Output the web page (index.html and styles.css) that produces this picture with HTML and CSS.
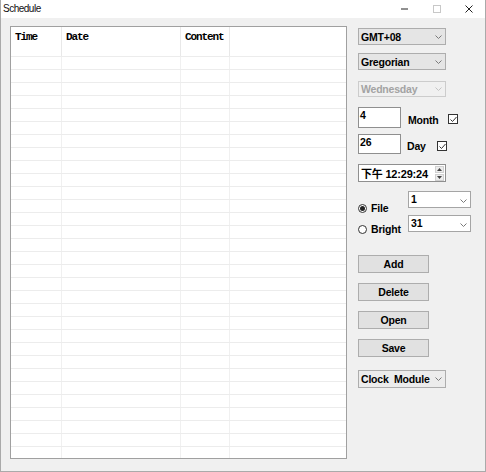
FILE: index.html
```html
<!DOCTYPE html>
<html lang="en">
  <head>
    <meta charset="UTF-8" />
    <meta name="viewport" content="width=device-width, initial-scale=1.0" />
    <title>Schedule</title>
    <link rel="stylesheet" href="styles.css">
  </head>
  <body>
    <div class="window">
      <div class="title-bar">
        <span class="title">Schedule</span>
        <div class="win-buttons">
          <span class="win-btn">
            <svg width="8" height="2" viewBox="0 0 8 2"><line x1="0" y1="1" x2="7" y2="1" stroke="#222" stroke-width="1" /></svg>
          </span>
          <span class="win-btn">
            <svg width="9" height="9" viewBox="0 0 9 9"><rect x="0.5" y="0.5" width="7" height="7" fill="none" stroke="#c8c8c8" /></svg>
          </span>
          <span class="win-btn">
            <svg width="8" height="8" viewBox="0 0 8 8"><path d="M0.5 0.5 L7.5 7.5 M7.5 0.5 L0.5 7.5" stroke="#222" stroke-width="1" /></svg>
          </span>
        </div>
      </div>

      <div class="content">
        <!-- 일정 목록 -->
        <div class="list">
          <div class="list-row list-head">
            <div class="cell">Time</div>
            <div class="cell">Date</div>
            <div class="cell">Content</div>
            <div class="cell"></div>
          </div>
          <div id="list-body"></div>
        </div>

        <!-- 설정 패널 -->
        <div class="panel">
          <div class="combo combo-gmt">
            <span>GMT+08</span>
            <svg class="chevron" width="7" height="4" viewBox="0 0 7 4"><polyline points="0.5,0.5 3.5,3.5 6.5,0.5" fill="none" stroke="#7a7a7a" /></svg>
          </div>
          <div class="combo combo-cal">
            <span>Gregorian</span>
            <svg class="chevron" width="7" height="4" viewBox="0 0 7 4"><polyline points="0.5,0.5 3.5,3.5 6.5,0.5" fill="none" stroke="#7a7a7a" /></svg>
          </div>
          <div class="combo combo-week disabled">
            <span>Wednesday</span>
            <svg class="chevron" width="7" height="4" viewBox="0 0 7 4"><polyline points="0.5,0.5 3.5,3.5 6.5,0.5" fill="none" stroke="#c4c4c4" /></svg>
          </div>

          <div class="field-row row-month">
            <div class="textbox">4</div>
            <span class="label label-month">Month</span>
            <span class="checkbox">
              <svg width="9" height="9" viewBox="0 0 9 9"><polyline points="1.5,4.5 3.5,6.5 7.5,2" fill="none" stroke="#333" stroke-width="1" /></svg>
            </span>
          </div>
          <div class="field-row row-day">
            <div class="textbox textbox-day">26</div>
            <span class="label label-day">Day</span>
            <span class="checkbox">
              <svg width="9" height="9" viewBox="0 0 9 9"><polyline points="1.5,4.5 3.5,6.5 7.5,2" fill="none" stroke="#333" stroke-width="1" /></svg>
            </span>
          </div>

          <div class="timebox">
            <span>下午 12:29:24</span>
            <div class="spin">
              <span class="spin-btn">
                <svg width="5" height="3" viewBox="0 0 5 3"><polygon points="2.5,0 5,3 0,3" fill="#444" /></svg>
              </span>
              <span class="spin-btn">
                <svg width="5" height="3" viewBox="0 0 5 3"><polygon points="0,0 5,0 2.5,3" fill="#444" /></svg>
              </span>
            </div>
          </div>

          <div class="mode-row row-file">
            <label class="radio-item">
              <span class="radio checked"></span>
              <span class="label">File</span>
            </label>
            <div class="combo combo-small">
              <span>1</span>
              <svg class="chevron" width="7" height="4" viewBox="0 0 7 4"><polyline points="0.5,0.5 3.5,3.5 6.5,0.5" fill="none" stroke="#7a7a7a" /></svg>
            </div>
          </div>
          <div class="mode-row row-bright">
            <label class="radio-item">
              <span class="radio"></span>
              <span class="label">Bright</span>
            </label>
            <div class="combo combo-small">
              <span>31</span>
              <svg class="chevron" width="7" height="4" viewBox="0 0 7 4"><polyline points="0.5,0.5 3.5,3.5 6.5,0.5" fill="none" stroke="#7a7a7a" /></svg>
            </div>
          </div>

          <button class="btn btn-first">Add</button>
          <button class="btn">Delete</button>
          <button class="btn">Open</button>
          <button class="btn">Save</button>

          <div class="combo combo-module">
            <span>Clock&nbsp;&nbsp;Module</span>
            <svg class="chevron" width="7" height="4" viewBox="0 0 7 4"><polyline points="0.5,0.5 3.5,3.5 6.5,0.5" fill="none" stroke="#7a7a7a" /></svg>
          </div>
        </div>
      </div>
    </div>

    <script>
      // 빈 행 채우기
      const listBody = document.getElementById("list-body");
      for (let i = 0; i < 31; i++) {
        const row = document.createElement("div");
        row.className = "list-row";
        for (let c = 0; c < 4; c++) {
          const cell = document.createElement("div");
          cell.className = "cell";
          row.appendChild(cell);
        }
        listBody.appendChild(row);
      }
    </script>
  </body>
</html>
```

FILE: styles.css
```css
/* Reset */
* {
  margin: 0;
  padding: 0;
  box-sizing: border-box;
}

body {
  font-family: "Liberation Sans", Arial, sans-serif;
  color: #000;
  background: #fff;
}

/* 창 */
.window {
  width: 486px;
  height: 472px;
  border: 1px solid #aaaaaa;
  border-top: none;
  background: #f0f0f0;
  display: flex;
  flex-direction: column;
}

.title-bar {
  height: 18px;
  background: #fff;
  display: flex;
  align-items: center;
  justify-content: space-between;
}

.title {
  font-size: 10px;
  letter-spacing: -0.5px;
  line-height: 18px;
  padding-left: 2px;
  color: #111;
}

.win-buttons {
  display: flex;
  height: 18px;
}

.win-btn {
  width: 32px;
  display: flex;
  align-items: center;
  justify-content: center;
}

.win-btn svg {
  display: block;
}

.content {
  flex: 1;
  display: flex;
  padding: 8px 0 0 9px;
  gap: 11px;
}

/* 일정 목록 */
.list {
  width: 337px;
  height: 433px;
  background: #fff;
  border: 1px solid #a0a0a0;
  overflow: hidden;
}

.list-row {
  display: grid;
  grid-template-columns: 51px 119px 49px 1fr;
  height: 13px;
  border-bottom: 1px solid #ececec;
}

.list-row .cell {
  border-right: 1px solid #f0f0f0;
}

.list-row .cell:last-child {
  border-right: none;
}

.list-head {
  height: 30px;
}

.list-head .cell {
  font-family: "Liberation Mono", "Courier New", monospace;
  font-weight: bold;
  font-size: 11px;
  letter-spacing: -1.1px;
  line-height: 12px;
  padding: 4px 0 0 4px;
  border-right-color: #e8e8e8;
}

/* 설정 패널 */
.panel {
  width: 113px;
  display: flex;
  flex-direction: column;
  align-items: flex-start;
  padding-top: 2px;
  font-weight: bold;
  font-size: 10.5px;
  letter-spacing: -0.2px;
}

.combo {
  width: 88px;
  height: 17px;
  background: #e5e5e5;
  border: 1px solid #adadad;
  display: flex;
  align-items: center;
  justify-content: space-between;
  padding: 0 3px 0 2px;
  line-height: 12px;
}

.chevron {
  display: block;
}

.combo-cal {
  margin-top: 8px;
}

.combo-week {
  margin-top: 11px;
  height: 16px;
}

.combo.disabled {
  background: #f0f0f0;
  border-color: #cccccc;
  color: #a3a3a3;
}

.combo-small {
  width: 63px;
  background: #fff;
  border-color: #a5a5a5;
  align-items: flex-start;
  padding-top: 1px;
}

.combo-small .chevron {
  margin-top: 6px;
}

.combo-module {
  margin-top: 13px;
  height: 18px;
  background: #ececec;
}

.field-row {
  display: flex;
  align-items: flex-start;
}

.row-month {
  margin-top: 10px;
}

.row-day {
  margin-top: 6px;
}

.textbox {
  width: 43px;
  height: 21px;
  background: #fff;
  border: 1px solid #8f8f8f;
  padding: 1px 0 0 1px;
  line-height: 12px;
}

.textbox-day {
  height: 20px;
}

.label {
  line-height: 13px;
}

.label-month {
  width: 40px;
  margin: 7px 0 0 7px;
}

.label-day {
  width: 30px;
  margin: 6px 0 0 6px;
}

.checkbox {
  width: 10px;
  height: 10px;
  margin-top: 7px;
  border: 1px solid #333;
  background: #fff;
}

.checkbox svg {
  display: block;
}

.timebox {
  margin-top: 10px;
  width: 88px;
  height: 18px;
  background: #fff;
  border: 1px solid #8f8f8f;
  display: flex;
  align-items: center;
  justify-content: space-between;
  padding: 0 1px 0 2px;
  font-family: "Liberation Sans", "Noto Sans CJK SC", sans-serif;
  font-size: 11px;
}

.spin {
  width: 9px;
  height: 15px;
  display: flex;
  flex-direction: column;
  gap: 1px;
}

.spin-btn {
  flex: 1;
  background: #ececec;
  border: 1px solid #d0d0d0;
  display: flex;
  align-items: center;
  justify-content: center;
}

.spin-btn svg {
  display: block;
}

/* 라디오 줄: 높이는 콤보 기준, 라벨은 아래로 삐져나옴 */
.mode-row {
  display: flex;
  align-items: flex-start;
  width: 113px;
  height: 17px;
}

.row-file {
  margin-top: 9px;
}

.row-bright {
  margin-top: 7px;
}

.radio-item {
  width: 50px;
  display: flex;
  align-items: center;
  gap: 4px;
  margin-top: 12px;
}

.row-bright .radio-item {
  margin-top: 9px;
}

.radio {
  width: 9px;
  height: 9px;
  border: 1px solid #333;
  border-radius: 50%;
  background: #fff;
  display: flex;
  align-items: center;
  justify-content: center;
}

.radio.checked::after {
  content: "";
  width: 5px;
  height: 5px;
  border-radius: 50%;
  background: #222;
}

.radio-item .label {
  line-height: 10px;
}

.btn {
  margin-top: 10px;
  width: 71px;
  height: 18px;
  background: #e1e1e1;
  border: 1px solid #adadad;
  font-family: inherit;
  font-weight: bold;
  font-size: 10.5px;
  letter-spacing: -0.2px;
  color: #000;
}

.btn-first {
  margin-top: 23px;
}
```
